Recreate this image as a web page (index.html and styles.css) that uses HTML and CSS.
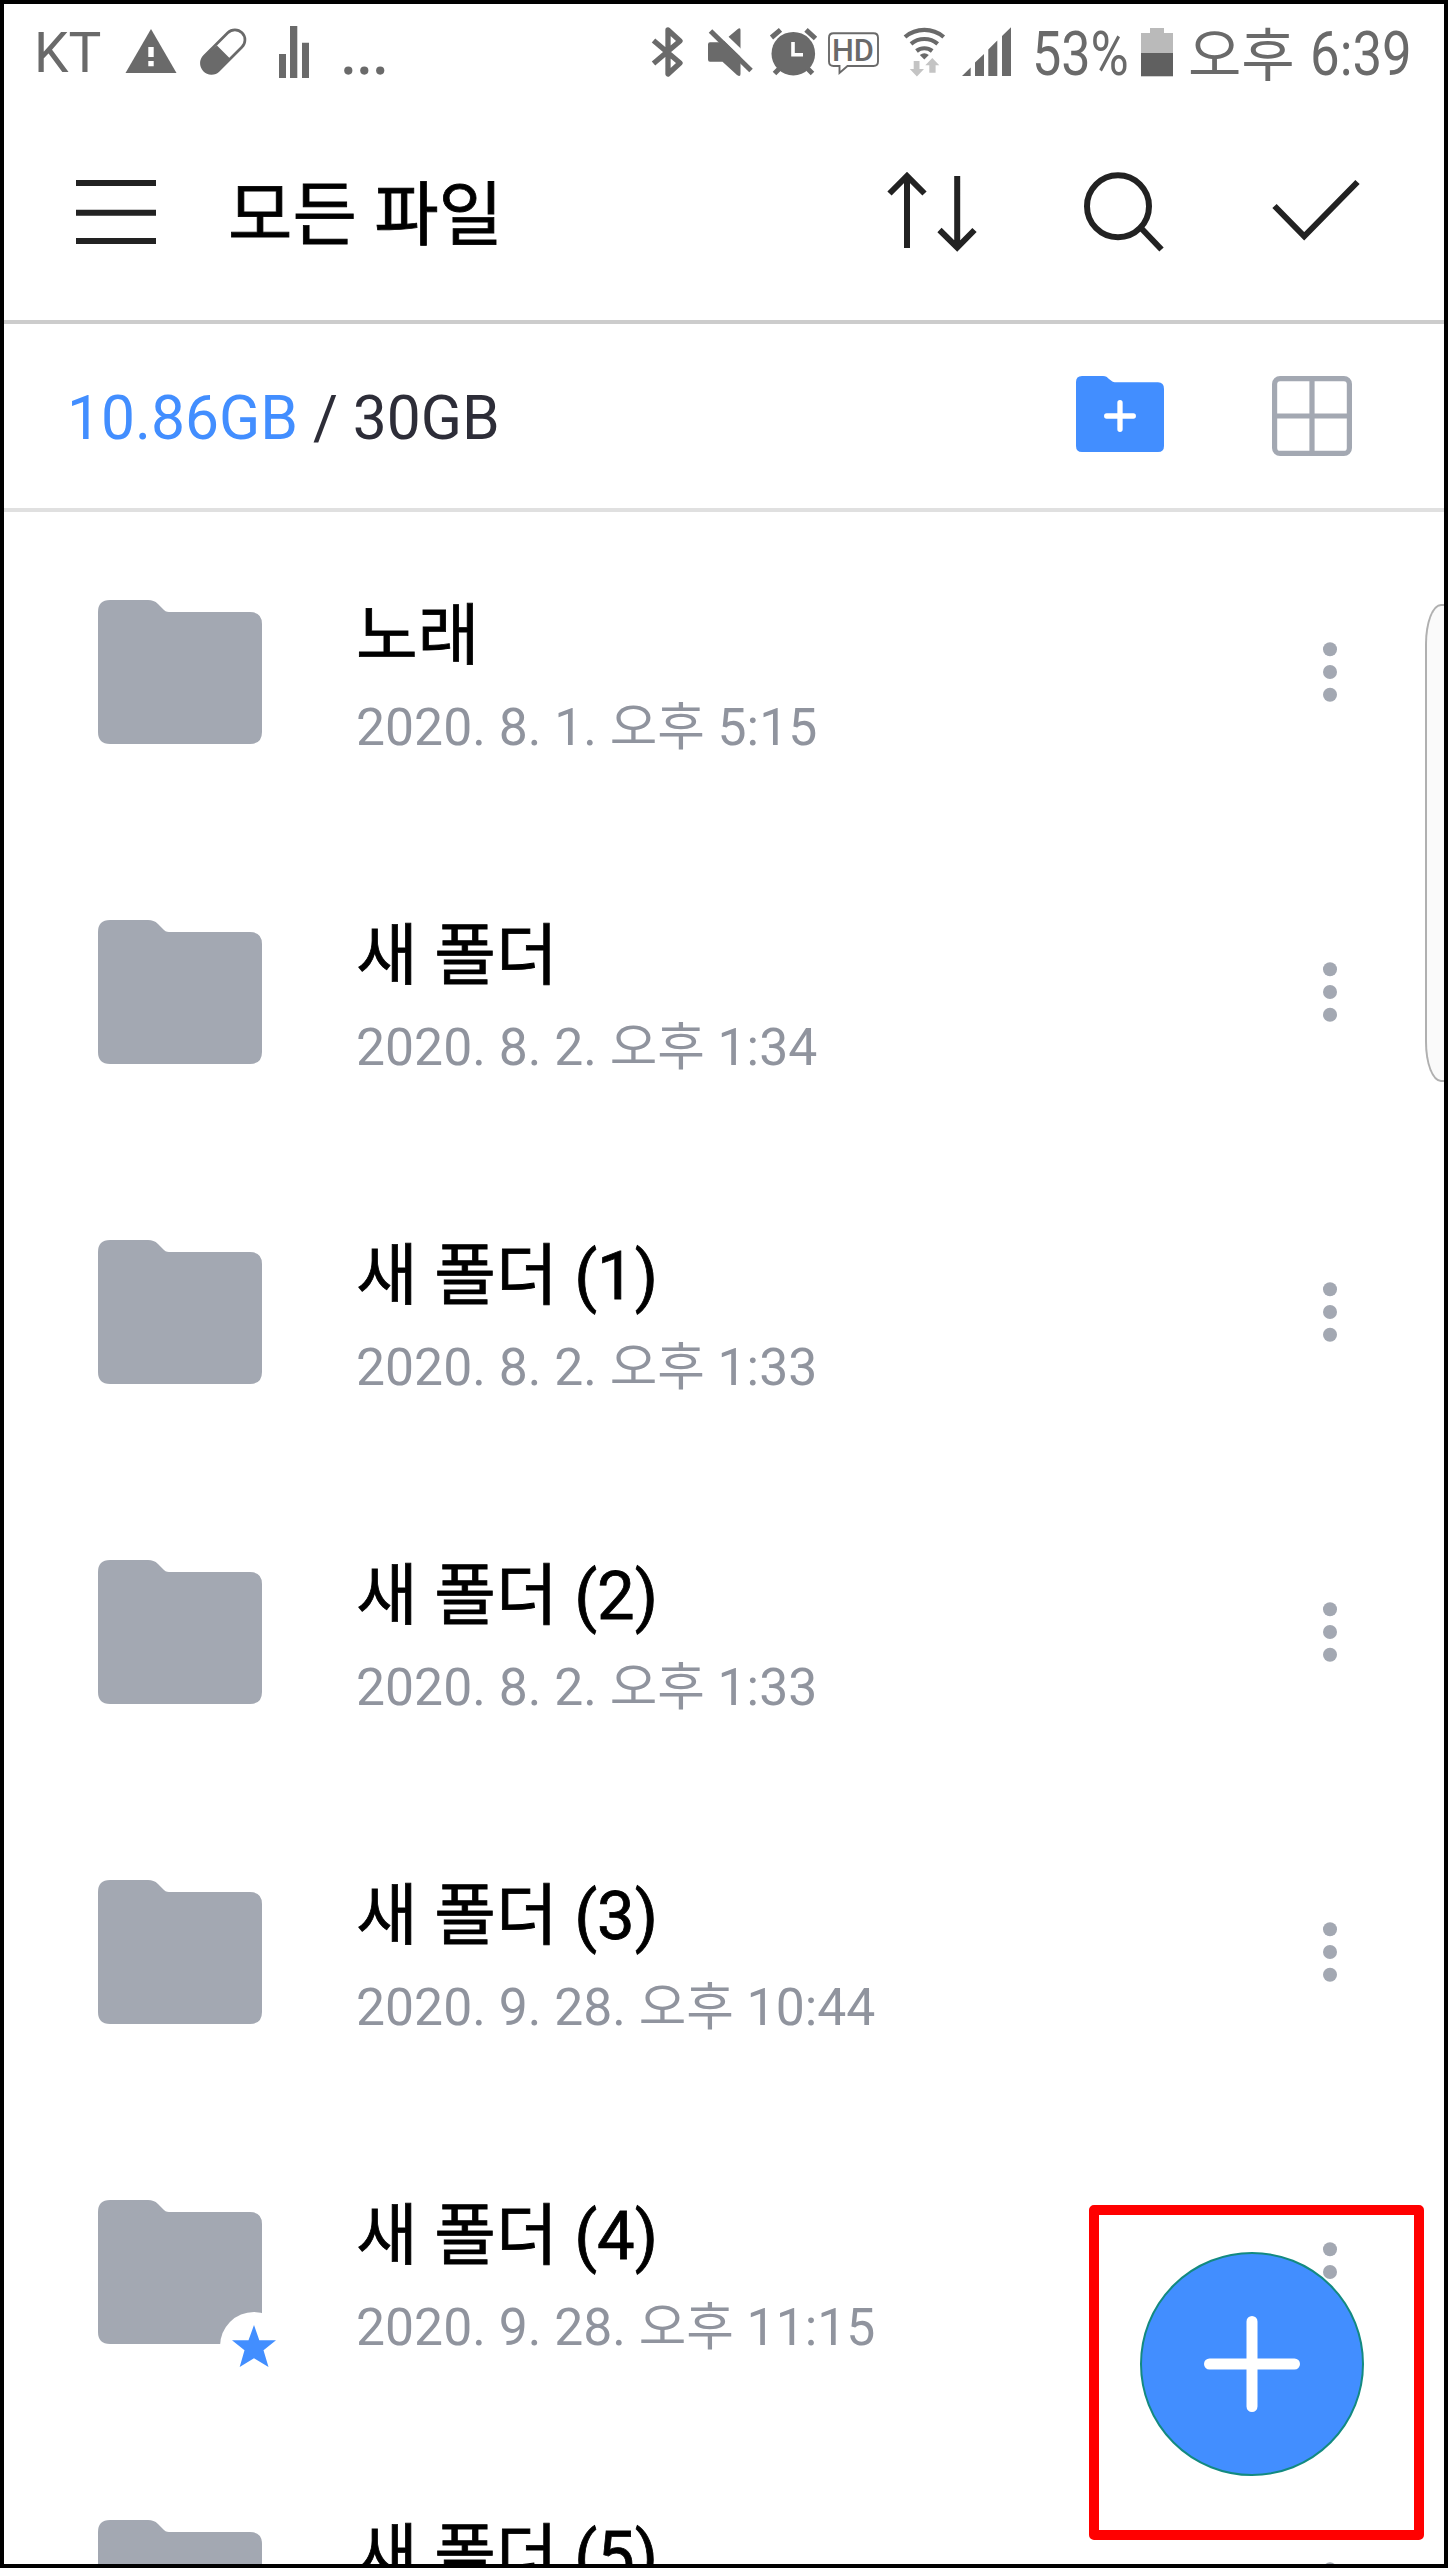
FILE: index.html
```html
<!DOCTYPE html>
<html lang="ko">
<head>
    <meta charset="UTF-8">
    <meta name="viewport" content="width=device-width, initial-scale=1.0">
    <title>모든 파일</title>
    <link rel="stylesheet" href="styles.css">
</head>
<body>
    <!-- Shared icons -->
    <svg class="defs" width="0" height="0">
        <symbol id="folder" viewBox="0 0 164 144">
            <path d="M12 0H50C54 0 57 1 60 4L66 10C68 12 70 12 73 12H152Q164 12 164 24V132Q164 144 152 144H12Q0 144 0 132V12Q0 0 12 0Z"/>
        </symbol>
        <symbol id="more" viewBox="0 0 20 64">
            <circle cx="10" cy="9.3" r="7"/>
            <circle cx="10" cy="32" r="7"/>
            <circle cx="10" cy="54.7" r="7"/>
        </symbol>
    </svg>

    <div class="status-bar">
        <span class="carrier">KT</span>
        <svg width="68" height="104" viewBox="120 4 68 104">
            <path d="M151 29L176.500 73H125.500Z"/>
            <path class="white" d="M148.300 47h5.400v10h-5.400zM148.300 61h5.400v5.300h-5.400z"/>
        </svg>
        <svg width="74" height="104" viewBox="188 4 74 104">
            <path class="line" stroke-width="2.700" d="M204.500 56L227.800 32.800A10 10 0 0 1 242 47L218.500 70.500A10 10 0 0 1 204.500 56Z"/>
            <path d="M217 45.500L230 58.500L219 70.500A10 10 0 0 1 204 56Z"/>
        </svg>
        <svg width="66" height="104" viewBox="262 4 66 104">
            <path d="M279 54h7v24h-7zM290 26h7.300v52h-7.300zM302 42.700h7v35.300h-7z"/>
        </svg>
        <svg width="72" height="104" viewBox="328 4 72 104">
            <circle cx="348.300" cy="70.600" r="4.100"/>
            <circle cx="364.300" cy="70.600" r="4.100"/>
            <circle cx="380.200" cy="70.600" r="4.100"/>
        </svg>

        <div class="status-right">
            <!-- bluetooth -->
            <svg width="50" height="104" viewBox="646 4 50 104">
                <path class="line" stroke-width="5.300" stroke-linejoin="round" d="M653.500 40.500L680 63L668 74V30L680 41L653.500 63.500"/>
            </svg>
            <!-- muted -->
            <svg width="66" height="104" viewBox="696 4 66 104">
                <path d="M710 42.300H722L737.500 29.200Q740.500 27 740.500 30V74Q740.500 77.500 737 75L722.500 61.700H710Q708 61.700 708 59.500V44.500Q708 42.300 710 42.300Z"/>
                <path class="cut" d="M714 27L755.500 67"/>
                <path class="line" stroke-width="5" d="M710.500 31L751 70.500"/>
            </svg>
            <!-- alarm -->
            <svg width="62" height="104" viewBox="762 4 62 104">
                <circle cx="793.300" cy="53.700" r="21.800"/>
                <path class="line" stroke-width="5" d="M771.500 37.500L780.500 29.800M806 29.800L815.500 38.500M774.500 73.500L780 68M812.500 73.500L807 68"/>
                <path class="line white-line" stroke-width="3.600" d="M793 42V54.700H803"/>
            </svg>
            <!-- HD voice -->
            <svg width="66" height="104" viewBox="824 4 66 104">
                <path class="line" stroke-width="1.900" d="M833.500 33.200H873.500Q878 33.200 878 37.700V61.500Q878 66 873.500 66H847.500L839.500 73V66H833.500Q829 66 829 61.500V37.700Q829 33.200 833.500 33.200Z"/>
                <text class="hd" x="832" y="60.500" textLength="42" lengthAdjust="spacingAndGlyphs">HD</text>
            </svg>
            <!-- wifi -->
            <svg width="64" height="104" viewBox="890 4 64 104">
                <path class="line" stroke-width="4.200" d="M905 37A30 30 0 0 1 943.700 37M911 43.800A21 21 0 0 1 937.700 43.800M916.500 51A12.500 12.500 0 0 1 932.200 51"/>
                <path d="M919.800 55Q924.300 51.500 928.800 55L924.300 59.500Z"/>
                <path class="pale" d="M913.700 61h5.800v8h4.500l-7.100 7.500l-7.100-7.500h3.900zM929.300 72.800v-7.500h-4l7-7.200l7 7.200h-3.700v7.500z"/>
            </svg>
            <!-- signal -->
            <svg width="76" height="104" viewBox="954 4 76 104">
                <path d="M962 76L970.700 67.500V76ZM975 76V62.500L984 54V76ZM988.300 76V49.500L997.300 40.500V76ZM1002 76V36L1011 27.300V76Z"/>
            </svg>
            <span class="percent">53%</span>
            <svg width="56" height="104" viewBox="1132 4 56 104">
                <path class="battery-empty" d="M1150 28h14v5h9v20h-32v-20h9z"/>
                <path class="battery-full" d="M1141 53h32v23.300h-32z"/>
            </svg>
            <span class="ampm">오후</span>
            <span class="clock">6:39</span>
        </div>
    </div>

    <header>
        <svg width="128" height="216" viewBox="52 104 128 216">
            <path d="M76 180h80v6h-80zM76 209.800h80v6h-80zM76 238h80v6h-80z"/>
        </svg>
        <h1>모든 파일</h1>
        <div class="actions">
            <svg width="160" height="216" viewBox="862 104 160 216">
                <path class="stroke" d="M907 248V176M889.500 193.500L907 176L924.500 193.500M957.200 176V248M939.500 230L957.200 247.500L974.500 230"/>
            </svg>
            <svg width="196" height="216" viewBox="1022 104 196 216">
                <circle class="stroke" cx="1118" cy="206.200" r="31"/>
                <path class="stroke" d="M1141 228L1161.500 249.500"/>
            </svg>
            <svg width="196" height="216" viewBox="1218 104 196 216">
                <path class="stroke" d="M1274.500 206L1304.200 236.300L1357.500 182"/>
            </svg>
        </div>
    </header>

    <section class="storage">
        <p><span class="used">10.86GB</span> / 30GB</p>
        <svg class="new-folder" width="88" height="76" viewBox="0 0 88 76">
            <path class="blue" d="M6 0H27C30 0 31 1 33 3L36 5.200C37 6 38 6.300 40 6.300H82Q88 6.300 88 13V70Q88 76 82 76H6Q0 76 0 70V6Q0 0 6 0Z"/>
            <path class="plus" d="M44 26.700V53.300M30.700 40H57.300"/>
        </svg>
        <svg class="grid-view" width="80" height="80" viewBox="0 0 80 80">
            <rect x="2.600" y="2.600" width="74.800" height="74.800" rx="5.500"/>
            <path d="M40 3V77M3 40H77"/>
        </svg>
    </section>

    <ul class="files">
        <li>
            <svg class="folder"><use href="#folder"/></svg>
            <div class="info"><h2>노래</h2><p>2020. 8. 1. 오후 5:15</p></div>
            <svg class="more"><use href="#more"/></svg>
        </li>
        <li>
            <svg class="folder"><use href="#folder"/></svg>
            <div class="info"><h2>새 폴더</h2><p>2020. 8. 2. 오후 1:34</p></div>
            <svg class="more"><use href="#more"/></svg>
        </li>
        <li>
            <svg class="folder"><use href="#folder"/></svg>
            <div class="info"><h2>새 폴더 (1)</h2><p>2020. 8. 2. 오후 1:33</p></div>
            <svg class="more"><use href="#more"/></svg>
        </li>
        <li>
            <svg class="folder"><use href="#folder"/></svg>
            <div class="info"><h2>새 폴더 (2)</h2><p>2020. 8. 2. 오후 1:33</p></div>
            <svg class="more"><use href="#more"/></svg>
        </li>
        <li>
            <svg class="folder"><use href="#folder"/></svg>
            <div class="info"><h2>새 폴더 (3)</h2><p>2020. 9. 28. 오후 10:44</p></div>
            <svg class="more"><use href="#more"/></svg>
        </li>
        <li>
            <svg class="folder" viewBox="0 0 164 144">
                <use href="#folder" width="164" height="144"/>
                <circle class="white" cx="156" cy="146" r="34"/>
                <path class="blue" d="M156 125L161.300 140.300H178L165.500 150.300L170.500 167L156 158.300L141.700 167L146.500 150.300L134 140.300H150.500Z"/>
            </svg>
            <div class="info"><h2>새 폴더 (4)</h2><p>2020. 9. 28. 오후 11:15</p></div>
            <svg class="more"><use href="#more"/></svg>
        </li>
        <li>
            <svg class="folder"><use href="#folder"/></svg>
            <div class="info"><h2>새 폴더 (5)</h2></div>
            <svg class="more"><use href="#more"/></svg>
        </li>
    </ul>

    <div class="edge-handle"></div>
    <div class="highlight"></div>
    <button class="fab" aria-label="추가">
        <svg width="96" height="96" viewBox="0 0 96 96">
            <path d="M48 5.500V90.500M5.500 48H90.500"/>
        </svg>
    </button>
</body>
</html>
```
FILE: styles.css
```css
* {
    box-sizing: border-box;
}
body {
    position: relative;
    width: 1448px;
    height: 2568px;
    margin: 0;
    overflow: hidden;
    border: 4px solid #000;
    background-color: #fff;
    color: #000;
    font-family: Roboto, "Noto Sans CJK KR", sans-serif;
}
h1, h2, p, ul {
    margin: 0;
    padding: 0;
    font-weight: 400;
}
h1, h2 {
    -webkit-text-stroke: 0.8px #000;
}
svg {
    display: block;
    flex: none;
}
.defs {
    position: absolute;
}
.white {
    fill: #fff;
}
.blue {
    fill: #428eff;
}

/* Status bar */
.status-bar {
    display: flex;
    height: 100px;
    padding-left: 30px;
    color: #6a6a6a;
    fill: #6a6a6a;
    line-height: 104px;
    white-space: nowrap;
}
.status-bar .line {
    fill: none;
    stroke: #6a6a6a;
}
.status-bar .white-line {
    stroke: #fff;
}
.cut {
    fill: none;
    stroke: #fff;
    stroke-width: 6;
}
.carrier {
    width: 86px;
    font-size: 55px;
    line-height: 98px;
}
.status-right {
    display: flex;
    margin-left: 246px;
}
.hd {
    font-size: 31px;
    font-weight: 500;
}
.pale {
    fill: #c4c4c4;
}
.percent, .clock {
    font-size: 61px;
    transform: scaleX(0.855);
    transform-origin: left;
}
.percent {
    width: 100px;
    margin-left: 2px;
    line-height: 101px;
}
.battery-empty {
    fill: #bababa;
}
.battery-full {
    fill: #606060;
}
.ampm {
    width: 122px;
    font-size: 58px;
}
.clock {
    width: 100px;
    line-height: 101px;
    transform: scaleX(0.865);
}

/* Title bar */
header {
    display: flex;
    height: 220px;
    padding-left: 48px;
    border-bottom: 4px solid #ccc;
    fill: #222;
}
h1 {
    width: 682px;
    padding-left: 48px;
    font-size: 70px;
    line-height: 225px;
}
.actions {
    display: flex;
}
.stroke {
    fill: none;
    stroke: #222;
    stroke-width: 6;
}

/* Storage row */
.storage {
    display: flex;
    align-items: flex-start;
    height: 188px;
    padding: 52px 92px 0 63px;
    border-bottom: 4px solid #e0e0e0;
}
.storage p {
    flex: 1;
    color: #2d2d38;
    font-size: 60.500px;
    line-height: 86px;
}
.storage .used {
    color: #428eff;
}
.plus {
    fill: none;
    stroke: #fff;
    stroke-width: 5.300;
    stroke-linecap: round;
}
.new-folder {
    margin-right: 108px;
}
.grid-view {
    fill: none;
    stroke: #a3a8b2;
    stroke-width: 5.200;
}

/* File list */
.files {
    list-style-type: none;
}
.files li {
    display: flex;
    align-items: center;
    height: 320px;
    padding: 0 104px 0 94px;
}
.folder {
    width: 164px;
    height: 144px;
    overflow: visible;
    fill: #a3a8b2;
}
.more {
    width: 20px;
    height: 64px;
    fill: #a3a8b2;
}
.info {
    flex: 1;
    height: 184px;
    margin: 20px 0 0 94px;
}
.info h2 {
    font-size: 67px;
    line-height: 92px;
}
.info p {
    color: #90949e;
    font-size: 51.700px;
    line-height: 92px;
}

/* Floating parts */
.edge-handle {
    position: absolute;
    top: 600px;
    right: 0;
    width: 19px;
    height: 478px;
    border: 2px solid #b0b0b0;
    border-right: none;
    border-radius: 16px 0 0 16px / 40px 0 0 40px;
    background-color: #fafafa;
}
.highlight {
    position: absolute;
    top: 2201px;
    left: 1085px;
    width: 335px;
    height: 335px;
    border: 10px solid #f00;
    border-radius: 5px;
}
.fab {
    display: flex;
    align-items: center;
    justify-content: center;
    position: absolute;
    top: 2248px;
    left: 1136px;
    width: 224px;
    height: 224px;
    padding: 0;
    border: 2px solid #138a80;
    border-radius: 50%;
    background-color: #428eff;
}
.fab path {
    fill: none;
    stroke: #fff;
    stroke-width: 11;
    stroke-linecap: round;
}
```
